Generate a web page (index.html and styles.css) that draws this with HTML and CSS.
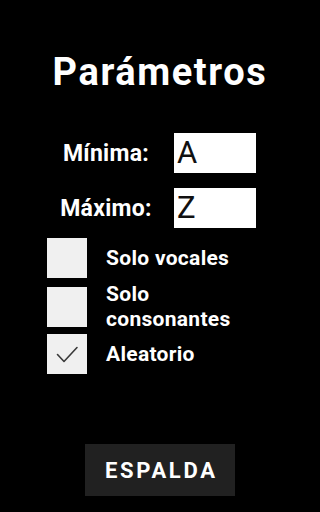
FILE: index.html
```html
<!DOCTYPE html>
<html lang="es">
<head>
<meta charset="utf-8">
<link rel="stylesheet" href="styles.css">
</head>
<body>
<div class="screen">
  <h1 class="title">Parámetros</h1>
  <div class="fields">
    <div class="field-row">
      <span class="field-label">Mínima:</span>
      <div class="field-input">A</div>
    </div>
    <div class="field-row">
      <span class="field-label">Máximo:</span>
      <div class="field-input">Z</div>
    </div>
  </div>
  <div class="options">
    <div class="option option-1">
      <span class="check"></span>
      <span class="option-label">Solo vocales</span>
    </div>
    <div class="option option-2">
      <span class="check"></span>
      <span class="option-label">Solo<br>consonantes</span>
    </div>
    <div class="option option-3">
      <span class="check">
        <svg class="tick" viewBox="0 0 40 40" width="40" height="40"><path d="M10.5 20.5 L17 27.5 L30 13.5" fill="none" stroke="#3a3a3a" stroke-width="1.6" stroke-linecap="round" stroke-linejoin="round"/></svg>
      </span>
      <span class="option-label">Aleatorio</span>
    </div>
  </div>
  <div class="footer">
    <div class="back-btn">ESPALDA</div>
  </div>
</div>
</body>
</html>
```

FILE: styles.css
```css
html, body {
  margin: 0;
  padding: 0;
  background: #000;
}
body {
  font-family: Roboto, "Noto Sans", "Liberation Sans", sans-serif;
  color: #fff;
}
.screen {
  width: 320px;
  height: 512px;
  display: flex;
  flex-direction: column;
}
.title {
  margin: 50px 0 0 0;
  font-size: 38px;
  line-height: 44px;
  font-weight: 700;
  letter-spacing: 1.6px;
  text-align: center;
}
.fields {
  margin-top: 39px;
  display: flex;
  flex-direction: column;
  gap: 15px;
}
.field-row {
  display: flex;
  align-items: center;
  height: 40px;
}
.field-label {
  margin-left: 40px;
  width: 132px;
  text-align: center;
  font-size: 23px;
  font-weight: 700;
  letter-spacing: 0.3px;
}
.field-input {
  margin-left: 2px;
  width: 79px;
  height: 40px;
  background: #fff;
  color: #111;
  font-size: 31px;
  font-weight: 400;
  line-height: 40px;
  padding-left: 3px;
  box-sizing: content-box;
}
.options {
  margin-top: 10px;
  display: flex;
  flex-direction: column;
}
.option {
  display: flex;
  align-items: flex-start;
  padding-left: 47px;
}
.option-1 { height: 49px; }
.option-2 { height: 47px; }
.option-3 { height: 40px; }
.check {
  width: 40px;
  height: 40px;
  background: #f0f0f0;
  flex: none;
  display: block;
}
.tick {
  display: block;
}
.option-label {
  margin-left: 19px;
  height: 40px;
  display: flex;
  align-items: center;
  font-size: 21px;
  font-weight: 700;
  line-height: 25px;
  letter-spacing: 0.3px;
}
.footer {
  margin-top: auto;
  margin-bottom: 16px;
  display: flex;
  justify-content: center;
}
.back-btn {
  width: 150px;
  height: 52px;
  background: #212121;
  color: #fff;
  font-size: 22px;
  font-weight: 700;
  letter-spacing: 2.7px;
  text-indent: 2.7px;
  display: flex;
  align-items: center;
  justify-content: center;
}
```
